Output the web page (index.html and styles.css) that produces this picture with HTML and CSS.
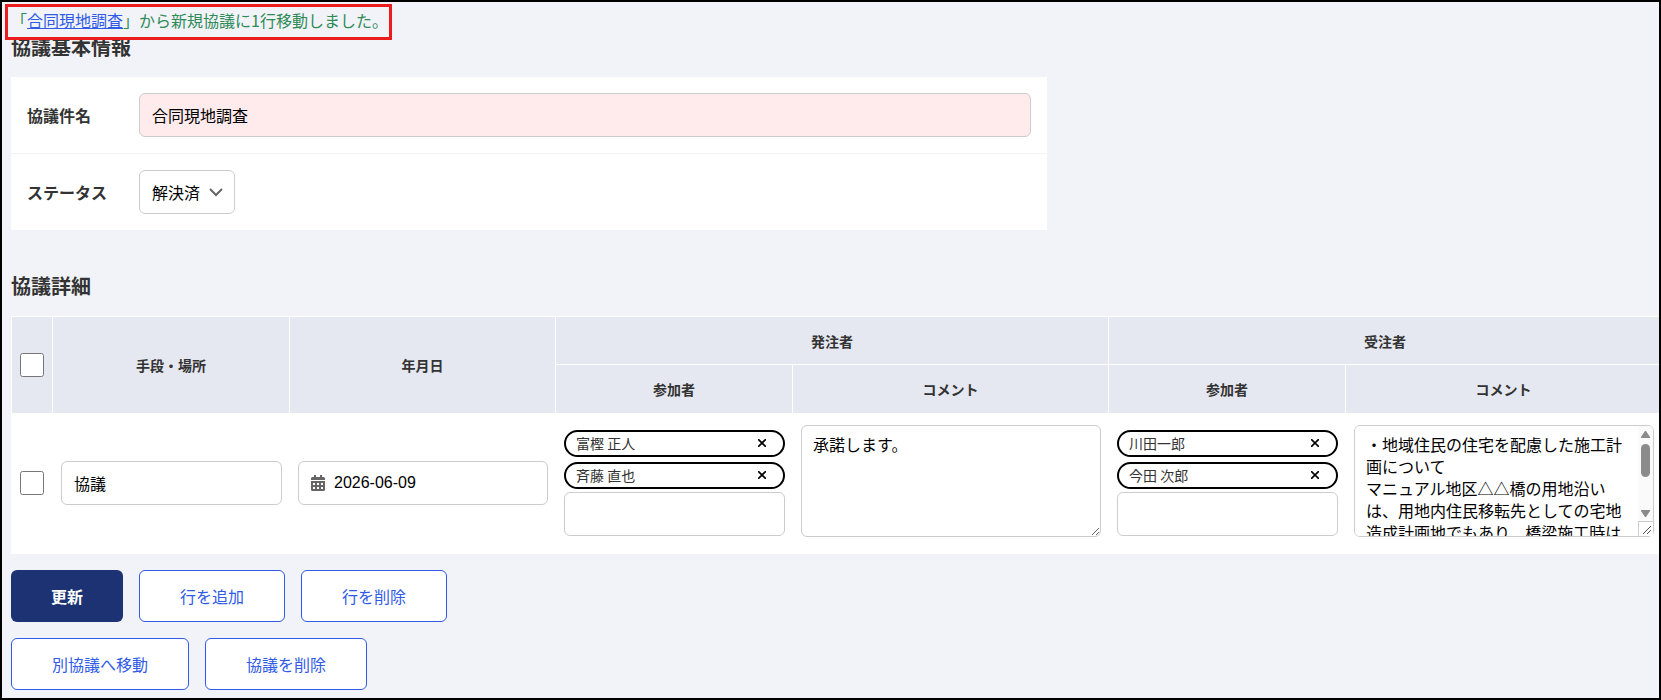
FILE: index.html
```
<!DOCTYPE html>
<html lang="ja">
<head>
<meta charset="utf-8">
<title>協議編集</title>
<link rel="stylesheet" href="styles.css">
</head>
<body>
<main class="page">
  <p class="message">「<a href="#">合同現地調査</a>」から新規協議に1行移動しました。</p>

  <form action="#" method="post">
    <h2>協議基本情報</h2>
    <div class="basic">
      <div class="basic-row">
        <label for="title">協議件名</label>
        <input type="text" id="title" class="required" value="合同現地調査">
      </div>
      <div class="basic-row">
        <label for="status">ステータス</label>
        <select id="status">
          <option>解決済</option>
        </select>
      </div>
    </div>

    <h2>協議詳細</h2>
    <table class="detail">
      <thead>
        <tr>
          <th rowspan="2"><input type="checkbox" aria-label="すべて選択"></th>
          <th rowspan="2">手段・場所</th>
          <th rowspan="2">年月日</th>
          <th colspan="2">発注者</th>
          <th colspan="2">受注者</th>
        </tr>
        <tr class="sub">
          <th>参加者</th>
          <th>コメント</th>
          <th>参加者</th>
          <th>コメント</th>
        </tr>
      </thead>
      <tbody>
        <tr>
          <td><input type="checkbox" aria-label="行を選択"></td>
          <td><input type="text" class="place" aria-label="手段・場所" value="協議"></td>
          <td>
            <label class="date">
              <svg width="14" height="16" viewBox="0 0 14 16" aria-hidden="true">
                <path fill="#666" fill-rule="evenodd" d="M3 0h2v2h4V0h2v2h1.500A1.500 1.500 0 0 1 14 3.500V5H0V3.500A1.500 1.500 0 0 1 1.500 2H3zM0 6h14v8.500a1.500 1.500 0 0 1-1.500 1.500h-11A1.500 1.500 0 0 1 0 14.500zM2 8v2h2V8zM6 8v2h2V8zM10 8v2h2V8zM2 12v2h2v-2zM6 12v2h2v-2zM10 12v2h2v-2z"/>
              </svg>
              <input type="text" aria-label="年月日" value="2026-06-09">
            </label>
          </td>
          <td>
            <div class="members">
              <div class="member">富樫 正人<button type="button" aria-label="富樫 正人を外す"><svg width="8" height="8" viewBox="0 0 8 8"><path d="M0 0l8 8M8 0l-8 8"/></svg></button></div>
              <div class="member">斉藤 直也<button type="button" aria-label="斉藤 直也を外す"><svg width="8" height="8" viewBox="0 0 8 8"><path d="M0 0l8 8M8 0l-8 8"/></svg></button></div>
              <input type="text" aria-label="発注者の参加者を追加">
            </div>
          </td>
          <td><div class="comment"><textarea aria-label="発注者コメント">承諾します。</textarea></div></td>
          <td>
            <div class="members">
              <div class="member">川田一郎<button type="button" aria-label="川田一郎を外す"><svg width="8" height="8" viewBox="0 0 8 8"><path d="M0 0l8 8M8 0l-8 8"/></svg></button></div>
              <div class="member">今田 次郎<button type="button" aria-label="今田 次郎を外す"><svg width="8" height="8" viewBox="0 0 8 8"><path d="M0 0l8 8M8 0l-8 8"/></svg></button></div>
              <input type="text" aria-label="受注者の参加者を追加">
            </div>
          </td>
          <td>
            <div class="comment scroll">
              <textarea aria-label="受注者コメント">・地域住民の住宅を配慮した施工計画について
マニュアル地区△△橋の用地沿いは、用地内住民移転先としての宅地造成計画地でもあり、橋梁施工時は



</textarea>
              <div class="scrollbar" aria-hidden="true">
                <svg width="9" height="7" viewBox="0 0 9 7"><path d="M4 0h1l4 6v1H0V6z"/></svg>
                <span class="thumb"></span>
                <svg width="9" height="7" viewBox="0 0 9 7"><path d="M4 7h1l4-6V0H0v1z"/></svg>
                <span class="corner"><svg width="8" height="8" viewBox="0 0 8 8"><path d="M0 8l8-8M4 8l4-4"/></svg></span>
              </div>
            </div>
          </td>
        </tr>
      </tbody>
    </table>

    <div class="buttons">
      <button type="submit" class="btn primary">更新</button>
      <button type="button" class="btn">行を追加</button>
      <button type="button" class="btn">行を削除</button>
    </div>
    <div class="buttons">
      <button type="button" class="btn">別協議へ移動</button>
      <button type="button" class="btn">協議を削除</button>
    </div>
  </form>
</main>
</body>
</html>
```
FILE: styles.css
```
* {
  box-sizing: border-box;
}

body {
  margin: 0;
  font-family: "Noto Sans CJK JP", sans-serif;
  font-size: 16px;
  line-height: 22px;
  color: #333;
  background: #f2f3f8;
}

.page {
  position: relative;
  min-height: 100vh;
  padding: 31px 0 8px 9px;
  border: 2px solid #000;
  overflow: hidden;
}

/* floats over the first heading */
.message {
  position: absolute;
  top: 2px;
  left: 3px;
  margin: 0;
  padding: 2px 1px 6px 3px;
  border: 3px solid #ed1c1c;
  background: #f2f3f8;
  color: #2e8b57;
  line-height: 22px;
}

.message a {
  color: #2f5be7;
}

h2 {
  margin: 0 0 16px;
  font-size: 20px;
  line-height: 28px;
}

input,
select,
textarea,
button {
  font: inherit;
  color: #000;
}

input[type="text"],
select,
textarea,
.date {
  padding: 10px 12px;
  border: 1px solid #ccc;
  border-radius: 6px;
  background: #fff;
}

input[type="checkbox"] {
  display: block;
  width: 24px;
  height: 24px;
  margin: 0;
}

.basic {
  max-width: 1036px;
  margin-bottom: 42px;
  background: #fff;
}

.basic-row {
  display: flex;
  align-items: center;
  padding: 16px;
}

.basic-row + .basic-row {
  border-top: 1px solid #f2f2f2;
}

.basic-row label {
  width: 112px;
  font-weight: bold;
}

.basic-row input {
  flex: 1;
}

input.required {
  background: #ffebeb;
}

select {
  appearance: none;
  padding: 10px 33px 10px 12px;
  background: #fff url("data:image/svg+xml,%3Csvg xmlns='http://www.w3.org/2000/svg' width='14' height='9'%3E%3Cpath d='M1 1l6 6 6-6' fill='none' stroke='%23666' stroke-width='2'/%3E%3C/svg%3E") no-repeat right 11px center;
}

.detail {
  width: max-content;
  margin-bottom: 16px;
  border-spacing: 0;
  background: #fff;
}

.detail th {
  height: 48px;
  padding: 0 8px;
  border-top: 1px solid #fff;
  border-left: 1px solid #fff;
  background: #e5e8f1;
  font-size: 14px;
}

.detail .sub th {
  height: 49px;
}

.detail td {
  padding: 12px 7px 13px 8px;
  border-left: 1px solid #fff;
}

.place {
  display: block;
  width: 221px;
}

.date {
  display: flex;
  align-items: center;
  gap: 9px;
  width: 250px;
}

.date input[type="text"] {
  flex: 1;
  min-width: 0;
  padding: 0;
  border: 0;
  font-family: "Liberation Sans", Arial, sans-serif;
}

.members {
  width: 221px;
}

.members input {
  display: block;
  width: 100%;
  height: 44px;
}

.member {
  display: flex;
  align-items: center;
  justify-content: space-between;
  height: 27px;
  margin-bottom: 5px;
  padding: 0 17px 1px 10px;
  border: 2px solid #000;
  border-radius: 14px;
  font-size: 14px;
}

.member:nth-child(2) {
  margin-bottom: 3px;
}

.member button {
  display: flex;
  padding: 0;
  border: 0;
  background: none;
}

.member path {
  stroke: #000;
  stroke-width: 1.6;
}

.comment {
  position: relative;
  width: 300px;
  height: 112px;
  margin-bottom: 4px;
}

.comment textarea {
  display: block;
  width: 100%;
  height: 100%;
  padding: 7px 11px;
}

.scroll textarea {
  padding-right: 27px;
  resize: none;
  scrollbar-width: none;
}

.scrollbar {
  position: absolute;
  top: 1px;
  right: 1px;
  bottom: 1px;
  display: flex;
  flex-direction: column;
  align-items: center;
  width: 15px;
  padding-top: 5px;
  border-radius: 0 5px 5px 0;
  background: #fafafa;
  fill: #8b8b8b;
}

.thumb {
  width: 9px;
  height: 33px;
  margin: 6px 0 auto;
  border-radius: 5px;
  background: #8b8b8b;
}

.corner {
  display: flex;
  align-items: flex-end;
  justify-content: flex-end;
  width: 15px;
  height: 15px;
  margin-top: 4px;
  padding: 2px;
  border-top: 1px solid #ccc;
  border-left: 1px solid #ccc;
  background: #fff;
}

.corner path {
  stroke: #555;
}

.buttons {
  display: flex;
  gap: 16px;
}

.buttons + .buttons {
  margin-top: 16px;
}

.btn {
  padding: 14px 40px;
  border: 1px solid #2f5be7;
  border-radius: 6px;
  background: #fff;
  color: #2f5be7;
}

.btn.primary {
  padding: 15px 40px;
  border: 0;
  background: #1c3272;
  color: #fff;
  font-weight: bold;
}
```
